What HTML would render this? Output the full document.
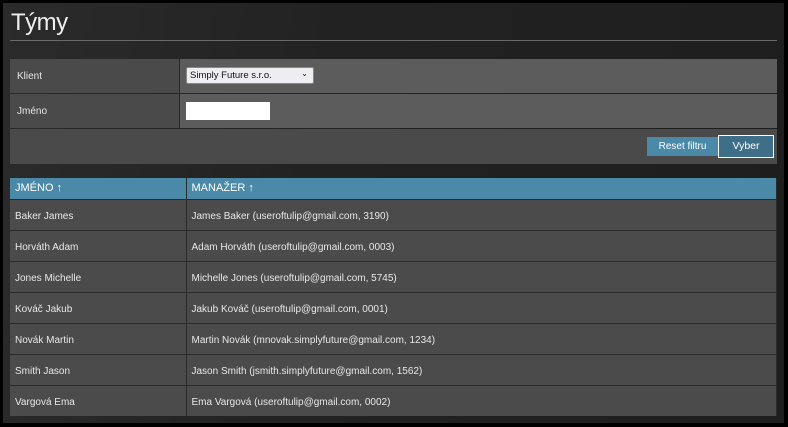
<!DOCTYPE html><html><head><style>
*{margin:0;padding:0;box-sizing:border-box}
body{width:788px;height:427px;background:#000;font-family:"Liberation Sans",sans-serif;overflow:hidden;position:relative}
#pg{position:absolute;left:3px;top:3px;width:781px;height:420px;background:linear-gradient(100deg,#2b2b2b,#222 40%,#1e1e1e)}
h1{position:absolute;left:8px;top:6px;font-size:24px;color:#eee;font-family:"Liberation Sans",sans-serif;font-weight:normal;letter-spacing:-0.5px}
.hr{position:absolute;left:7px;top:37px;width:767px;height:1px;background:#6a6a6a}
.f{position:absolute;left:7px;width:767px;font-size:10px;color:#e6e6e6}
.f .l{position:absolute;left:0;top:0;width:169px;height:100%;background:#4a4a4a;padding-left:7px;display:flex;align-items:center}
.f .r{position:absolute;left:170px;top:0;right:0;height:100%;background:#5c5c5c}
table{position:absolute;left:7px;top:175px;width:767px;border-collapse:collapse;font-size:10px;color:#e8e8e8}
th{background:#4a8aa8;height:21px;text-align:left;padding-left:5px;font-weight:normal;font-size:11px;color:#fff;border-right:1px solid #2a2a2a}
td{background:#4b4b4b;height:31px;padding-left:5px;padding-top:3px;border-top:1px solid #2a2a2a;border-right:1px solid #2a2a2a}
</style></head><body><div id="pg">
<h1>Týmy</h1><div class="hr"></div>
<div class="f" style="top:56px;height:34px"><div class="l">Klient</div><div class="r"><div style="position:absolute;left:6px;top:8px;width:128px;height:17px;background:#eeeef2;border:1px solid #888;border-radius:2px;color:#111;font-size:9.5px;padding:2px 3px">Simply Future s.r.o.<span style="position:absolute;right:5px;top:1px;font-size:8px">&#8964;</span></div></div></div>
<div class="f" style="top:91px;height:34px"><div class="l">Jméno</div><div class="r"><div style="position:absolute;left:6px;top:8px;width:84px;height:18px;background:#fff"></div></div></div>
<div class="f" style="top:126px;height:35px;background:#4a4a4a">
<div style="position:absolute;left:637px;top:8px;width:71px;height:19px;background:#4a8aa8;color:#fff;text-align:center;line-height:19px">Reset filtru</div>
<div style="position:absolute;left:708px;top:6px;width:56px;height:23px;background:#3f6f88;border:1px solid #fff;color:#fff;text-align:center;line-height:21px;font-size:10.5px">Vyber</div></div>
<table><tr><th style="width:176px">JMÉNO ↑</th><th>MANAŽER ↑</th></tr>
<tr><td>Baker James</td><td>James Baker (useroftulip@gmail.com, 3190)</td></tr>
<tr><td>Horváth Adam</td><td>Adam Horváth (useroftulip@gmail.com, 0003)</td></tr>
<tr><td>Jones Michelle</td><td>Michelle Jones (useroftulip@gmail.com, 5745)</td></tr>
<tr><td>Kováč Jakub</td><td>Jakub Kováč (useroftulip@gmail.com, 0001)</td></tr>
<tr><td>Novák Martin</td><td>Martin Novák (mnovak.simplyfuture@gmail.com, 1234)</td></tr>
<tr><td>Smith Jason</td><td>Jason Smith (jsmith.simplyfuture@gmail.com, 1562)</td></tr>
<tr><td>Vargová Ema</td><td>Ema Vargová (useroftulip@gmail.com, 0002)</td></tr>
</table></div></body></html>
